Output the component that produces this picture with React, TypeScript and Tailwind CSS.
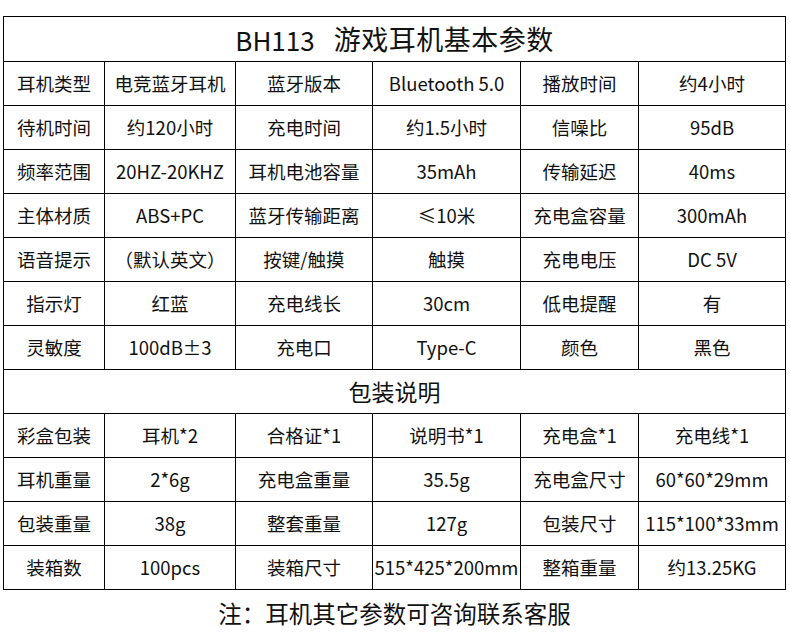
import React from 'react';

const specRows: string[][] = [
    ['耳机类型', '电竞蓝牙耳机', '蓝牙版本', 'Bluetooth 5.0', '播放时间', '约4小时'],
    ['待机时间', '约120小时', '充电时间', '约1.5小时', '信噪比', '95dB'],
    ['频率范围', '20HZ-20KHZ', '耳机电池容量', '35mAh', '传输延迟', '40ms'],
    ['主体材质', 'ABS+PC', '蓝牙传输距离', '≤10米', '充电盒容量', '300mAh'],
    ['语音提示', '（默认英文）', '按键/触摸', '触摸', '充电电压', 'DC 5V'],
    ['指示灯', '红蓝', '充电线长', '30cm', '低电提醒', '有'],
    ['灵敏度', '100dB±3', '充电口', 'Type-C', '颜色', '黑色'],
];

const packRows: string[][] = [
    ['彩盒包装', '耳机*2', '合格证*1', '说明书*1', '充电盒*1', '充电线*1'],
    ['耳机重量', '2*6g', '充电盒重量', '35.5g', '充电盒尺寸', '60*60*29mm'],
    ['包装重量', '38g', '整套重量', '127g', '包装尺寸', '115*100*33mm'],
    ['装箱数', '100pcs', '装箱尺寸', '515*425*200mm', '整箱重量', '约13.25KG'],
];

const Row: React.FC<{ cells: string[] }> = ({ cells }) => (
    <div className="grid grid-cols-[101px_131px_137px_148px_118px_147px]">
        {cells.map((c, i) => (
            <div
                key={i}
                className="h-[44px] flex items-center justify-center border-r border-b border-black text-[18.5px] whitespace-nowrap"
            >
                {c}
            </div>
        ))}
    </div>
);

const App: React.FC = () => {
    return (
        <div
            className="w-[790px] h-[641px] bg-white text-[#111] pt-[16px] pl-[3px]"
            style={{ fontFamily: '"Noto Sans CJK SC", "Noto Sans", sans-serif' }}
        >
            <div className="w-[783px] border-l border-t border-black">
                <div className="h-[45px] flex items-center justify-center border-r border-b border-black text-[27px] whitespace-nowrap">
                    <span className="text-[26px]">BH113</span>
                    <span className="ml-[19px] tracking-[0.5px]">游戏耳机基本参数</span>
                </div>
                {specRows.map((r, i) => (
                    <Row key={i} cells={r} />
                ))}
                <div className="h-[44px] flex items-center justify-center border-r border-b border-black text-[23px]">
                    包装说明
                </div>
                {packRows.map((r, i) => (
                    <Row key={i} cells={r} />
                ))}
            </div>
            <div className="w-[783px] mt-[8px] h-[32px] flex items-center justify-center text-[23.5px] whitespace-nowrap">
                注：耳机其它参数可咨询联系客服
            </div>
        </div>
    );
};

export default App;
